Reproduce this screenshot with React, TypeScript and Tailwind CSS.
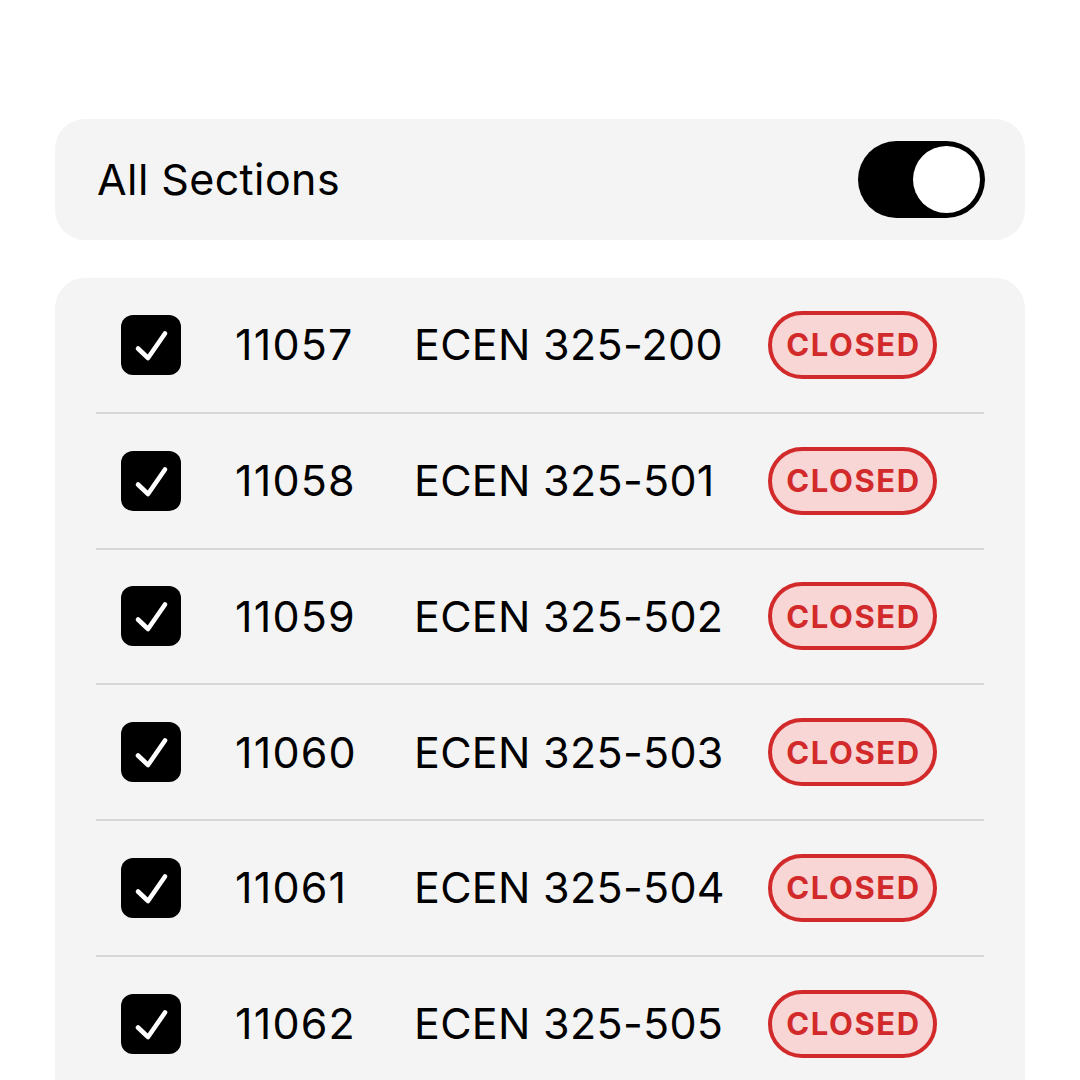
import React from "react";

const rows = [
  ["11057", "ECEN 325-200"],
  ["11058", "ECEN 325-501"],
  ["11059", "ECEN 325-502"],
  ["11060", "ECEN 325-503"],
  ["11061", "ECEN 325-504"],
  ["11062", "ECEN 325-505"],
  ["11063", "ECEN 325-506"],
];

function Check() {
  return (
    <div className="w-[60px] h-[60px] rounded-[12px] bg-black flex-none">
      <svg width="60" height="60" viewBox="0 0 60 60" fill="none" stroke="white" strokeWidth="4.6" strokeLinecap="round" strokeLinejoin="round">
        <path d="M17 33.5L27 43L44 18.5" />
      </svg>
    </div>
  );
}

export default function App() {
  return (
    <div className="w-[1080px] h-[1080px] overflow-hidden bg-white pt-[119px] px-[55px] text-black" style={{ fontFamily: "Inter, 'Noto Sans', sans-serif" }}>
      <div className="h-[121px] rounded-[30px] bg-[#f4f4f4] flex items-center justify-between pl-[42px] pr-[40px]">
        <span className="text-[43px] leading-none tracking-[0.4px]">All Sections</span>
        <div className="w-[127px] h-[77px] rounded-full bg-black flex items-center justify-end pr-[5px]">
          <div className="w-[67px] h-[67px] rounded-full bg-white" />
        </div>
      </div>
      <div className="mt-[38px] rounded-t-[30px] bg-[#f4f4f4] px-[41px] h-[900px]">
        {rows.map(([num, sec], i) => (
          <div key={num}>
            {i > 0 && <div className="h-[2px] bg-[#d6d6d6]" />}
            <div className="h-[133.75px] flex items-center pl-[25px]">
              <Check />
              <span className="ml-[54px] w-[179px] flex-none text-[43px] leading-none tracking-[1.2px]">{num}</span>
              <span className="w-[354px] flex-none text-[43px] leading-none tracking-[0.3px]">{sec}</span>
              <span className="h-[68px] w-[169px] flex-none rounded-full border-[4.5px] border-[#d22a2a] bg-[#f8d6d6] flex items-center justify-center text-[#d22a2a] font-bold text-[31px] leading-none tracking-[1.6px] pl-[2px]">
                CLOSED
              </span>
            </div>
          </div>
        ))}
      </div>
    </div>
  );
}
